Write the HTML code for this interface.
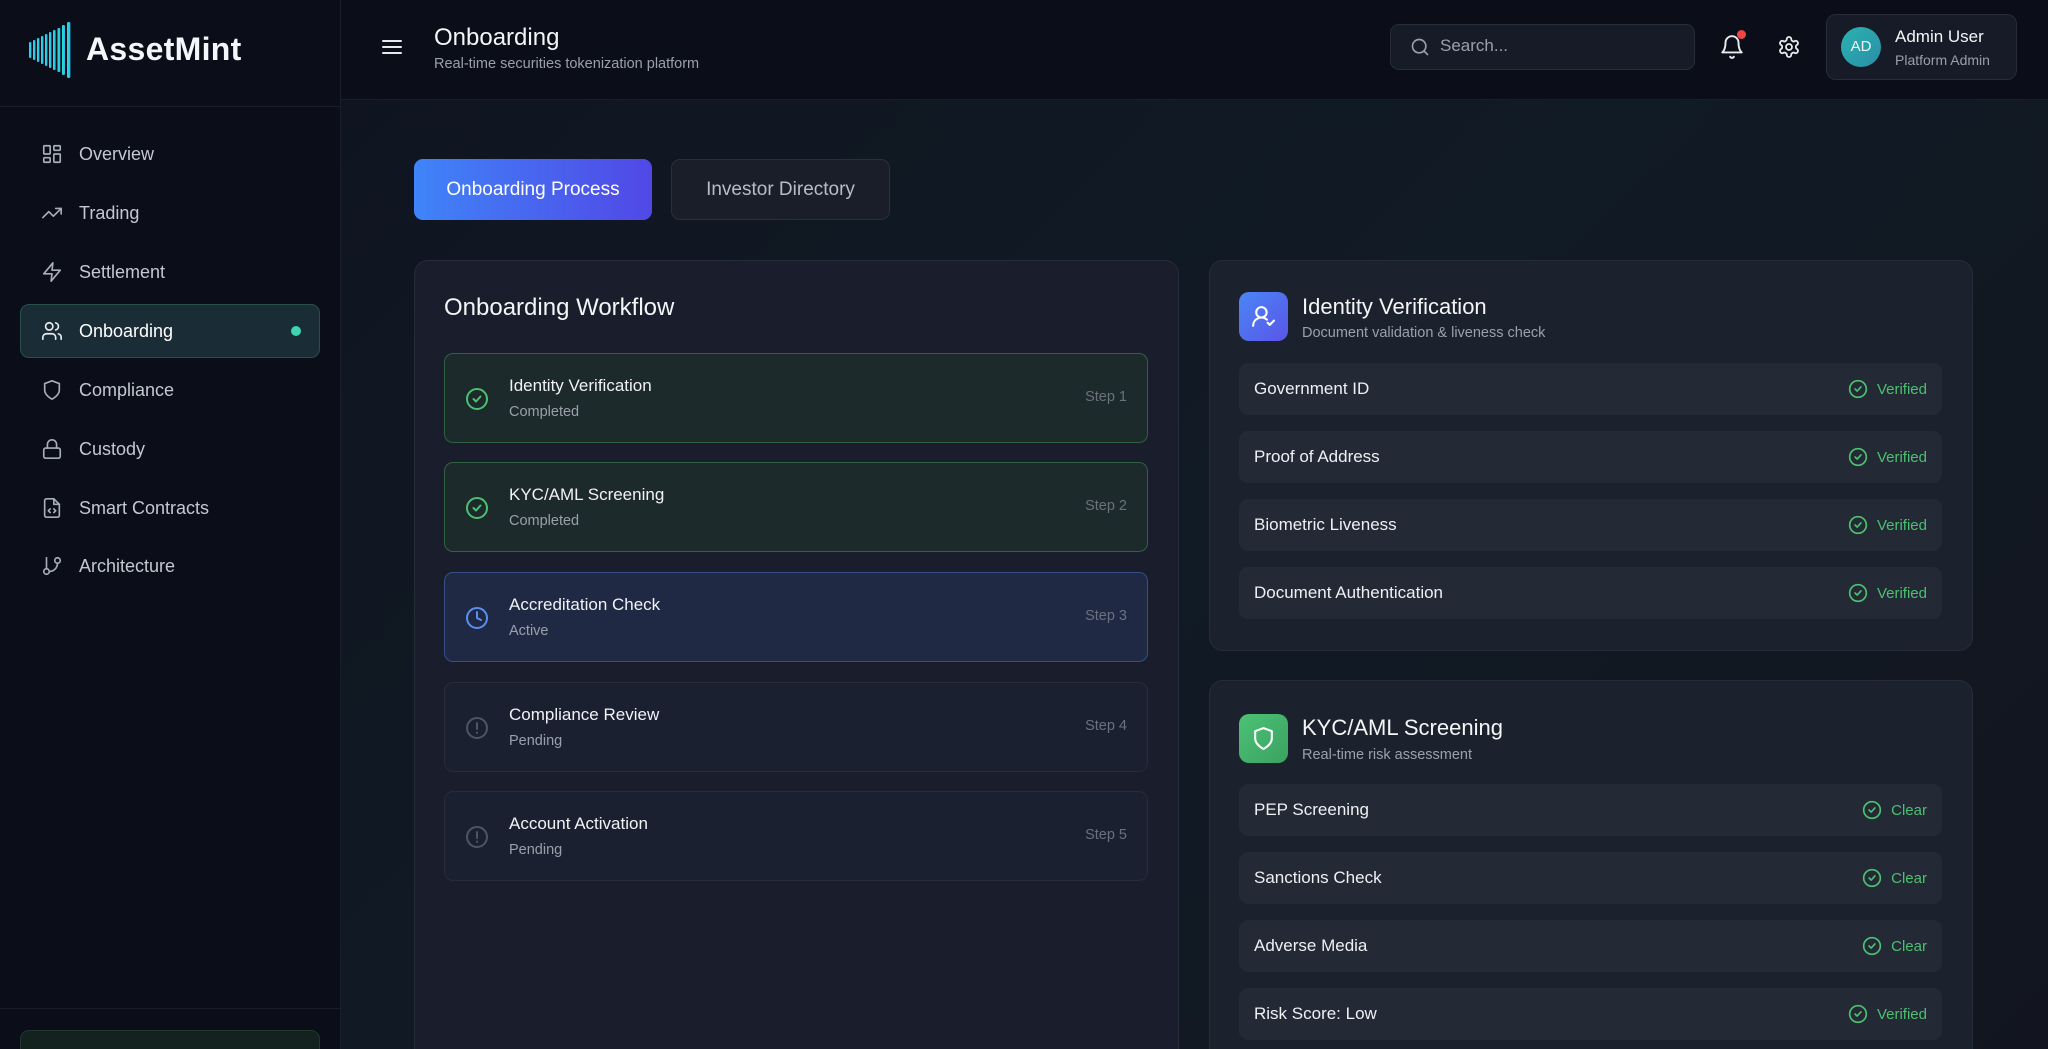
<!DOCTYPE html>
<html><head><meta charset="utf-8">
<style>
*{box-sizing:border-box;margin:0;padding:0}
html,body{width:2048px;height:1049px;overflow:hidden}
body{font-family:"Liberation Sans",sans-serif;background:#111822;color:#fff;position:relative}
#wrap{position:absolute;left:0;top:0;width:2048px;height:1049px;overflow:hidden}
.sb{position:absolute;left:0;top:0;width:341px;height:1049px;background:#0b0d18;border-right:1px solid #1a1e2a}
.sbh{position:absolute;left:0;top:0;width:340px;height:107px;border-bottom:1px solid #1a1e2a}
.logo{position:absolute;left:86px;top:31px;font-size:32px;font-weight:bold;letter-spacing:0.3px;color:#f4f6fa}
.nav{position:absolute;left:41px;height:30px;display:flex;align-items:center;font-size:18px;color:#c4c8d0}
.nav svg{width:22px;height:22px;margin-right:16px;stroke:#a8adb8;fill:none;stroke-width:1.8;stroke-linecap:round;stroke-linejoin:round}
.act{position:absolute;left:20px;top:304px;width:300px;height:54px;background:#1a2d36;border:1px solid #285049;border-radius:9px}
.main{position:absolute;left:341px;top:0;right:0;bottom:0;background:linear-gradient(135deg,#0f1420 0%,#111b25 50%,#12151f 100%)}
.hdr{position:absolute;left:341px;top:0;right:0;height:100px;background:#0b0e18;border-bottom:1px solid #1a1e2a}
.card{position:absolute;background:#1a1f2c;border:1px solid #262c39;border-radius:14px}
.step{position:absolute;left:444px;width:704px;height:90px;border-radius:9px;border:1px solid #262c38;background:#1b2030}
.step .t{position:absolute;left:64px;top:22px;font-size:17px;color:#f0f2f5}
.step .s{position:absolute;left:64px;top:50px;font-size:14.5px;color:#9aa0aa}
.step .n{position:absolute;right:20px;top:35px;font-size:14.5px;color:#6b717c}
.step svg{position:absolute;left:20px;top:33px;width:24px;height:24px;fill:none;stroke-width:2;stroke-linecap:round;stroke-linejoin:round}
.row{position:absolute;left:1239px;width:703px;height:52px;border-radius:9px;background:#232a35}
.row .l{position:absolute;left:15px;top:16px;font-size:17px;color:#eef0f3}
.row .r{position:absolute;right:15px;top:16px;font-size:15px;color:#4cc070;display:flex;align-items:center}
.row .r svg{width:20px;height:20px;margin-right:9px;fill:none;stroke:#4cc070;stroke-width:2;stroke-linecap:round;stroke-linejoin:round}
.ch{position:absolute;font-size:22px;color:#f4f5f7}
.cs{position:absolute;font-size:14.5px;color:#9ba1ab}
</style></head><body><div id="wrap">
<div class="main"></div>
<div class="sb"></div>
<div class="sbh"></div>
<svg style="position:absolute;left:28px;top:22px" width="46" height="56" viewBox="0 0 46 56">
<defs><linearGradient id="lg" x1="0" x2="1"><stop offset="0" stop-color="#30e0d0"/><stop offset="1" stop-color="#28b8f0"/></linearGradient></defs>
<g fill="url(#lg)">
<rect x="1" y="20" width="2.4" height="16" rx="1"/><rect x="5" y="18" width="2.4" height="20" rx="1"/><rect x="9" y="16" width="2.4" height="24" rx="1"/><rect x="13" y="14" width="2.4" height="28" rx="1"/><rect x="17" y="12" width="2.4" height="32" rx="1"/><rect x="21" y="10" width="2.4" height="36" rx="1"/><rect x="25" y="8" width="2.6" height="40" rx="1"/><rect x="29.5" y="6" width="2.8" height="44" rx="1"/><rect x="34" y="3" width="3" height="50" rx="1.2"/><rect x="39" y="0" width="3.4" height="56" rx="1.5"/></g></svg>
<div class="logo">AssetMint</div>

<div class="act"></div>
<div style="position:absolute;left:291px;top:326px;width:10px;height:10px;border-radius:50%;background:#3ed4b0"></div>
<div class="nav" style="top:139px"><svg viewBox="0 0 24 24"><rect x="3" y="3" width="7" height="9" rx="1"/><rect x="14" y="3" width="7" height="5" rx="1"/><rect x="14" y="12" width="7" height="9" rx="1"/><rect x="3" y="16" width="7" height="5" rx="1"/></svg>Overview</div>
<div class="nav" style="top:198px"><svg viewBox="0 0 24 24"><path d="M22 7l-8.5 8.5-5-5L2 17"/><path d="M16 7h6v6"/></svg>Trading</div>
<div class="nav" style="top:257px"><svg viewBox="0 0 24 24"><path d="M13 2L3 14h9l-1 8 10-12h-9l1-8z"/></svg>Settlement</div>
<div class="nav" style="top:316px;color:#fff"><svg viewBox="0 0 24 24" style="stroke:#e8ecef"><path d="M16 21v-2a4 4 0 0 0-4-4H6a4 4 0 0 0-4 4v2"/><circle cx="9" cy="7" r="4"/><path d="M22 21v-2a4 4 0 0 0-3-3.87"/><path d="M16 3.13a4 4 0 0 1 0 7.75"/></svg>Onboarding</div>
<div class="nav" style="top:375px"><svg viewBox="0 0 24 24"><path d="M12 22s8-4 8-10V5l-8-3-8 3v7c0 6 8 10 8 10z"/></svg>Compliance</div>
<div class="nav" style="top:434px"><svg viewBox="0 0 24 24"><rect x="3" y="11" width="18" height="11" rx="2"/><path d="M7 11V7a5 5 0 0 1 10 0v4"/></svg>Custody</div>
<div class="nav" style="top:493px"><svg viewBox="0 0 24 24"><path d="M14 2H6a2 2 0 0 0-2 2v16a2 2 0 0 0 2 2h12a2 2 0 0 0 2-2V8z"/><path d="M14 2v6h6"/><path d="M10 13l-2 2 2 2M14 13l2 2-2 2"/></svg>Smart Contracts</div>
<div class="nav" style="top:551px"><svg viewBox="0 0 24 24"><path d="M6 3v12"/><circle cx="18" cy="6" r="3"/><circle cx="6" cy="18" r="3"/><path d="M18 9a9 9 0 0 1-9 9"/></svg>Architecture</div>
<div style="position:absolute;left:0;top:1008px;width:340px;border-top:1px solid #1a1e2a"></div>
<div style="position:absolute;left:20px;top:1030px;width:300px;height:40px;background:#13211f;border:1px solid #22382f;border-radius:9px"></div>

<div class="hdr"></div>
<svg style="position:absolute;left:381px;top:37px" width="22" height="20" viewBox="0 0 22 20" stroke="#e5e7ea" stroke-width="2" stroke-linecap="round"><path d="M2 4h18M2 10h18M2 16h18"/></svg>
<div style="position:absolute;left:434px;top:24px;font-size:24px;color:#f4f5f7">Onboarding</div>
<div style="position:absolute;left:434px;top:56px;font-size:14.5px;color:#9aa0aa">Real-time securities tokenization platform</div>
<div style="position:absolute;left:1390px;top:24px;width:305px;height:46px;background:#161b27;border:1px solid #272c38;border-radius:9px"></div>
<svg style="position:absolute;left:1410px;top:37px" width="20" height="20" viewBox="0 0 24 24" fill="none" stroke="#9aa0aa" stroke-width="2" stroke-linecap="round"><circle cx="11" cy="11" r="8"/><path d="M21 21l-4.3-4.3"/></svg>
<div style="position:absolute;left:1440px;top:36px;font-size:17px;color:#9aa0aa">Search...</div>
<svg style="position:absolute;left:1719px;top:34px" width="26" height="26" viewBox="0 0 24 24" fill="none" stroke="#e8eaed" stroke-width="1.8" stroke-linecap="round" stroke-linejoin="round"><path d="M6 8a6 6 0 0 1 12 0c0 7 3 9 3 9H3s3-2 3-9"/><path d="M10.3 21a1.94 1.94 0 0 0 3.4 0"/></svg>
<div style="position:absolute;left:1737px;top:30px;width:9px;height:9px;border-radius:50%;background:#ef4444"></div>
<svg style="position:absolute;left:1777px;top:35px" width="24" height="24" viewBox="0 0 24 24" fill="none" stroke="#e8eaed" stroke-width="1.8" stroke-linecap="round" stroke-linejoin="round"><path d="M12.22 2h-.44a2 2 0 0 0-2 2v.18a2 2 0 0 1-1 1.730l-.43.25a2 2 0 0 1-2 0l-.15-.08a2 2 0 0 0-2.73.73l-.22.38a2 2 0 0 0 .73 2.73l.15.1a2 2 0 0 1 1 1.72v.51a2 2 0 0 1-1 1.74l-.15.09a2 2 0 0 0-.73 2.73l.22.38a2 2 0 0 0 2.73.73l.15-.08a2 2 0 0 1 2 0l.43.25a2 2 0 0 1 1 1.73V20a2 2 0 0 0 2 2h.44a2 2 0 0 0 2-2v-.18a2 2 0 0 1 1-1.73l.43-.25a2 2 0 0 1 2 0l.15.08a2 2 0 0 0 2.73-.73l.22-.39a2 2 0 0 0-.73-2.73l-.15-.08a2 2 0 0 1-1-1.740v-.5a2 2 0 0 1 1-1.74l.15-.09a2 2 0 0 0 .73-2.73l-.22-.38a2 2 0 0 0-2.73-.73l-.15.08a2 2 0 0 1-2 0l-.43-.25a2 2 0 0 1-1-1.73V4a2 2 0 0 0-2-2z"/><circle cx="12" cy="12" r="3"/></svg>
<div style="position:absolute;left:1826px;top:14px;width:191px;height:66px;background:#161b27;border:1px solid #272c38;border-radius:10px"></div>
<div style="position:absolute;left:1841px;top:27px;width:40px;height:40px;border-radius:50%;background:linear-gradient(135deg,#2ab3b0,#2a8ea8);font-size:15px;color:#e8f6f6;text-align:center;line-height:40px">AD</div>
<div style="position:absolute;left:1895px;top:27px;font-size:17px;color:#f4f5f7">Admin User</div>
<div style="position:absolute;left:1895px;top:52px;font-size:14px;color:#9aa0aa">Platform Admin</div>

<div style="position:absolute;left:414px;top:159px;width:238px;height:61px;border-radius:9px;background:linear-gradient(90deg,#3f84f8,#5148e6);font-size:19px;color:#fff;text-align:center;line-height:61px">Onboarding Process</div>
<div style="position:absolute;left:671px;top:159px;width:219px;height:61px;border-radius:9px;background:#1a1e29;border:1px solid #2a2f3b;font-size:19px;color:#b8bcc4;text-align:center;line-height:59px">Investor Directory</div>

<div class="card" style="left:414px;top:260px;width:765px;height:820px;background:#1a1e2c"></div>
<div class="ch" style="left:444px;top:294px;font-size:24px">Onboarding Workflow</div>

<div class="step" style="top:353px;background:#1c2a2b;border-color:#2f6240"><svg viewBox="0 0 24 24" stroke="#4cc070"><circle cx="12" cy="12" r="10"/><path d="M8.5 12l2.5 2.5 4.5-5"/></svg><div class="t">Identity Verification</div><div class="s">Completed</div><div class="n">Step 1</div></div>
<div class="step" style="top:462px;background:#1c2a2b;border-color:#2f6240"><svg viewBox="0 0 24 24" stroke="#4cc070"><circle cx="12" cy="12" r="10"/><path d="M8.5 12l2.5 2.5 4.5-5"/></svg><div class="t">KYC/AML Screening</div><div class="s">Completed</div><div class="n">Step 2</div></div>
<div class="step" style="top:572px;background:#1f2944;border-color:#34508a"><svg viewBox="0 0 24 24" stroke="#5a8ff0"><circle cx="12" cy="12" r="10"/><path d="M12 6v6l4 2"/></svg><div class="t">Accreditation Check</div><div class="s">Active</div><div class="n">Step 3</div></div>
<div class="step" style="top:682px"><svg viewBox="0 0 24 24" stroke="#4e5460"><circle cx="12" cy="12" r="10"/><path d="M12 7v6M12 16.5v.5"/></svg><div class="t">Compliance Review</div><div class="s">Pending</div><div class="n">Step 4</div></div>
<div class="step" style="top:791px"><svg viewBox="0 0 24 24" stroke="#4e5460"><circle cx="12" cy="12" r="10"/><path d="M12 7v6M12 16.5v.5"/></svg><div class="t">Account Activation</div><div class="s">Pending</div><div class="n">Step 5</div></div>

<div class="card" style="left:1209px;top:260px;width:764px;height:391px;background:#1b222d"></div>
<div style="position:absolute;left:1239px;top:292px;width:49px;height:49px;border-radius:10px;background:linear-gradient(135deg,#4a86f6,#5a55e8)"></div>
<svg style="position:absolute;left:1251px;top:304px" width="25" height="25" viewBox="0 0 24 24" fill="none" stroke="#fff" stroke-width="2" stroke-linecap="round" stroke-linejoin="round"><path d="M2 21a8 8 0 0 1 13.3-6"/><circle cx="10" cy="8" r="5"/><path d="M16 18l2 2 4-4"/></svg>
<div class="ch" style="left:1302px;top:294px">Identity Verification</div>
<div class="cs" style="left:1302px;top:325px">Document validation &amp; liveness check</div>
<div class="row" style="top:363px"><div class="l">Government ID</div><div class="r"><svg viewBox="0 0 24 24"><circle cx="12" cy="12" r="10"/><path d="M8.5 12l2.5 2.5 4.5-5"/></svg>Verified</div></div>
<div class="row" style="top:431px"><div class="l">Proof of Address</div><div class="r"><svg viewBox="0 0 24 24"><circle cx="12" cy="12" r="10"/><path d="M8.5 12l2.5 2.5 4.5-5"/></svg>Verified</div></div>
<div class="row" style="top:499px"><div class="l">Biometric Liveness</div><div class="r"><svg viewBox="0 0 24 24"><circle cx="12" cy="12" r="10"/><path d="M8.5 12l2.5 2.5 4.5-5"/></svg>Verified</div></div>
<div class="row" style="top:567px"><div class="l">Document Authentication</div><div class="r"><svg viewBox="0 0 24 24"><circle cx="12" cy="12" r="10"/><path d="M8.5 12l2.5 2.5 4.5-5"/></svg>Verified</div></div>

<div class="card" style="left:1209px;top:680px;width:764px;height:420px;background:#1b222d"></div>
<div style="position:absolute;left:1239px;top:714px;width:49px;height:49px;border-radius:10px;background:linear-gradient(135deg,#4cc276,#3aa260)"></div>
<svg style="position:absolute;left:1251px;top:726px" width="25" height="25" viewBox="0 0 24 24" fill="none" stroke="#fff" stroke-width="2" stroke-linecap="round" stroke-linejoin="round"><path d="M12 22s8-4 8-10V5l-8-3-8 3v7c0 6 8 10 8 10z"/></svg>
<div class="ch" style="left:1302px;top:715px">KYC/AML Screening</div>
<div class="cs" style="left:1302px;top:747px">Real-time risk assessment</div>
<div class="row" style="top:784px"><div class="l">PEP Screening</div><div class="r"><svg viewBox="0 0 24 24"><circle cx="12" cy="12" r="10"/><path d="M8.5 12l2.5 2.5 4.5-5"/></svg>Clear</div></div>
<div class="row" style="top:852px"><div class="l">Sanctions Check</div><div class="r"><svg viewBox="0 0 24 24"><circle cx="12" cy="12" r="10"/><path d="M8.5 12l2.5 2.5 4.5-5"/></svg>Clear</div></div>
<div class="row" style="top:920px"><div class="l">Adverse Media</div><div class="r"><svg viewBox="0 0 24 24"><circle cx="12" cy="12" r="10"/><path d="M8.5 12l2.5 2.5 4.5-5"/></svg>Clear</div></div>
<div class="row" style="top:988px"><div class="l">Risk Score: Low</div><div class="r"><svg viewBox="0 0 24 24"><circle cx="12" cy="12" r="10"/><path d="M8.5 12l2.5 2.5 4.5-5"/></svg>Verified</div></div>
</div></body></html>
